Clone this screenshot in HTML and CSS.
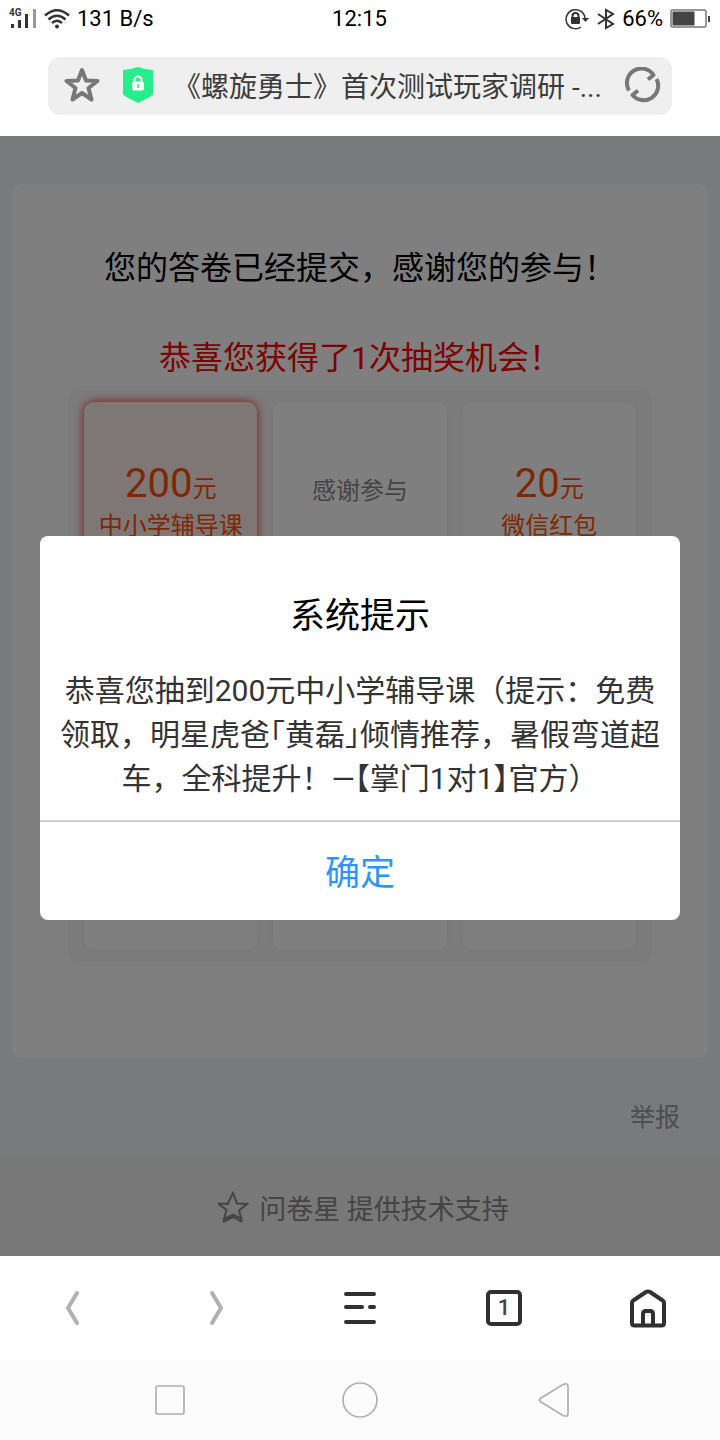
FILE: index.html
```html
<!DOCTYPE html>
<html lang="zh-CN">
<head>
    <meta charset="UTF-8">
    <meta name="viewport" content="width=device-width, initial-scale=1.0">
    <title>《螺旋勇士》首次测试玩家调研</title>
    <link rel="stylesheet" href="styles.css">
</head>
<body>
    <header class="status-bar">
        <div class="status-left">
            <svg width="28" height="22" viewBox="0 0 28 22">
                <text class="signal-label" x="0" y="8">4G</text>
                <path d="M2 16h3v4H2zM9 12h3v8H9zM16 6h3v14h-3z" fill="#333"/>
                <path d="M24 1h3v19h-3z" fill="#999"/>
            </svg>
            <svg width="26" height="22" viewBox="0 0 26 22" fill="none" stroke="#333" stroke-width="2.600">
                <path d="M1 7.500Q13-3 25 7.500M4.500 11.500Q13 4 21.500 11.500M8 15Q13 10.500 18 15"/>
                <circle cx="13" cy="18.500" r="2" fill="#333" stroke="none"/>
            </svg>
            <span>131 B/s</span>
        </div>
        <time>12:15</time>
        <div class="status-right">
            <svg width="26" height="22" viewBox="0 0 26 22" fill="none" stroke="#333" stroke-width="1.500">
                <path d="M17 19A9.500 9.500 0 1 1 21 10"/>
                <path d="M18 10h7l-3.500 4z" fill="#333" stroke="none"/>
                <path d="M8.500 11V8a3 3 0 0 1 6 0v3" stroke-width="2"/>
                <rect x="7" y="9" width="9" height="7" rx="1" fill="#333" stroke="none"/>
            </svg>
            <svg width="18" height="22" viewBox="0 0 18 22" fill="none" stroke="#333" stroke-width="2">
                <path d="M1 6l15 10-7 4V2l7 4L1 16"/>
            </svg>
            <span>66%</span>
            <svg width="40" height="20" viewBox="0 0 40 20">
                <rect x="1" y="1" width="35" height="17" rx="1" fill="none" stroke="#333"/>
                <path d="M2.500 2.500h22v14h-22zM38 7h2v6h-2z" fill="#444"/>
            </svg>
        </div>
    </header>

    <div class="address-bar">
        <button class="icon-button" aria-label="收藏">
            <svg width="36" height="36" viewBox="0 0 36 36" fill="none" stroke="#777" stroke-width="4" stroke-linejoin="round">
                <path d="M18 3l4 10.500 11.500.500-9 7 3 11.500L18 26l-9.500 6.500 3-11.500-9-7L14 13.500z"/>
            </svg>
        </button>
        <svg class="shield" width="30" height="36" viewBox="0 0 30 36">
            <path d="M15 0Q22 2.500 30 3v24.500Q29 29 15 36 1 29 0 27.500V3Q8 2.500 15 0z" fill="#26ee8b"/>
            <path d="M11.500 15v-2a3.500 3.500 0 0 1 7 0v2" fill="none" stroke="#fff" stroke-width="2"/>
            <rect x="9" y="14.500" width="12" height="9" rx="2" fill="#fff"/>
            <path d="M14.200 17h1.600v4h-1.600z" fill="#26ee8b"/>
        </svg>
        <input class="address" type="text" value="《螺旋勇士》首次测试玩家调研 -..." aria-label="网页标题" readonly>
        <button class="icon-button" aria-label="刷新">
            <svg width="36" height="36" viewBox="0 0 36 36" fill="none" stroke="#777" stroke-width="4" stroke-linejoin="round">
                <path d="M4 23.500A14.500 14.500 0 0 1 28.500 8L23 12.500M31.500 12A14.500 14.500 0 0 1 7.500 28l5.500-4.500"/>
            </svg>
        </button>
    </div>

    <main class="page">
        <section class="card">
            <h1 class="message">您的答卷已经提交，感谢您的参与！</h1>
            <p class="message chance">恭喜您获得了1次抽奖机会！</p>
            <div class="lottery">
                <div class="tile prize active">
                    <p class="amount">200<small>元</small></p>
                    <p>中小学辅导课</p>
                </div>
                <div class="tile">感谢参与</div>
                <div class="tile prize">
                    <p class="amount">20<small>元</small></p>
                    <p>微信红包</p>
                </div>
                <div class="tile"></div>
                <div class="tile"></div>
                <div class="tile"></div>
                <div class="tile"></div>
                <div class="tile"></div>
                <div class="tile"></div>
            </div>
        </section>
        <div class="report"><a href="#">举报</a></div>
        <footer class="support">
            <svg width="32" height="32" viewBox="0 0 32 32" fill="none" stroke="#888" stroke-width="2">
                <path d="M11 12l5-10 4 10.500 10 .500-8 6.500 3 10.500M1 12.500l8.500 6.500L7 28l9-4.500 8 4M1 12.500l11 .500M6 31l10-5 9 5"/>
            </svg>
            <a href="#">问卷星 提供技术支持</a>
        </footer>

        <div class="overlay">
            <div class="dialog" role="dialog" aria-labelledby="dialog-title">
                <h2 class="dialog-title" id="dialog-title">系统提示</h2>
                <p class="dialog-text">
                    恭喜您抽到200元中小学辅导课（提示：免费<br>
                    领取，明星虎爸<span class="half">「</span>黄磊<span class="half">」</span>倾情推荐，暑假弯道超<br>
                    车，全科提升！—<span class="half">【</span>掌门1对1<span class="half">】</span>官方）
                </p>
                <button class="confirm">确定</button>
            </div>
        </div>
    </main>

    <nav class="toolbar">
        <button class="icon-button" aria-label="后退">
            <svg width="40" height="40" viewBox="0 0 40 40" fill="none" stroke="#b0b0b0" stroke-width="4" stroke-linecap="round" stroke-linejoin="round">
                <path d="M25 5l-9 15 9 15"/>
            </svg>
        </button>
        <button class="icon-button" aria-label="前进">
            <svg width="40" height="40" viewBox="0 0 40 40" fill="none" stroke="#b0b0b0" stroke-width="4" stroke-linecap="round" stroke-linejoin="round">
                <path d="M16 5l9 15-9 15"/>
            </svg>
        </button>
        <button class="icon-button" aria-label="菜单">
            <svg width="40" height="40" viewBox="0 0 40 40" fill="none" stroke="#303030" stroke-width="4" stroke-linecap="round">
                <path d="M6 6h28M6 19h16M30 19h4M6 34h28"/>
            </svg>
        </button>
        <button class="icon-button" aria-label="标签页"><span class="tab-count">1</span></button>
        <button class="icon-button" aria-label="主页">
            <svg width="40" height="40" viewBox="0 0 40 40" fill="none" stroke="#303030" stroke-width="4" stroke-linejoin="round">
                <path d="M4 15q0-2 2-3L18 4q2-1.200 4 0l12 8q2 1 2 3v20q0 2.500-2.500 2.500h-27Q4 37.500 4 35z"/>
                <path d="M15 37V26q0-3 3-3h4q3 0 3 3v11"/>
            </svg>
        </button>
    </nav>

    <nav class="system-nav">
        <button class="icon-button" aria-label="最近任务">
            <svg width="40" height="40" viewBox="0 0 40 40" fill="none" stroke="#b0b0b0" stroke-width="1.700">
                <rect x="6" y="6" width="28" height="28" rx="2"/>
            </svg>
        </button>
        <button class="icon-button" aria-label="主屏幕">
            <svg width="40" height="40" viewBox="0 0 40 40" fill="none" stroke="#b0b0b0" stroke-width="1.700">
                <circle cx="20" cy="20" r="17"/>
            </svg>
        </button>
        <button class="icon-button" aria-label="返回">
            <svg width="40" height="40" viewBox="0 0 40 40" fill="none" stroke="#b0b0b0" stroke-width="1.700">
                <path d="M11 18L33 4.500q5-2 5 2v27q0 4-5 2L11 22q-3-2 0-4z"/>
            </svg>
        </button>
    </nav>
</body>
</html>
```
FILE: styles.css
```css
* {
    box-sizing: border-box;
}
body {
    margin: 0;
    min-height: 100vh;
    display: flex;
    flex-direction: column;
    background: #fff;
    color: #000;
    font-family: Roboto, "Noto Sans CJK SC", sans-serif;
    font-size: 24px;
}
h1, h2, p {
    margin: 0;
    font-weight: 400;
}
a {
    color: inherit;
    text-decoration: none;
}
svg {
    display: block;
    flex: none;
}
button, input {
    font-family: inherit;
    color: inherit;
    border: 0;
    padding: 0;
    background: none;
}
.icon-button {
    display: flex;
    align-items: center;
    justify-content: center;
    cursor: pointer;
}

/* phone status bar */
.status-bar {
    display: grid;
    grid-template-columns: 1fr auto 1fr;
    align-items: center;
    height: 37px;
    padding: 0 10px 0 9px;
    font-size: 22px;
}
.status-left, .status-right {
    display: flex;
    align-items: center;
    gap: 7px;
}
.status-right {
    justify-content: flex-end;
}
.signal-label {
    font-size: 10px;
    font-weight: 700;
    fill: #333;
}

.address-bar {
    display: flex;
    align-items: center;
    height: 58px;
    margin: 20px 48px 21px;
    padding: 0 11px 2px 16px;
    border-radius: 12px;
    background: #efefef;
}
.shield {
    margin: 0 20px 0 23px;
}
.address {
    flex: 1;
    min-width: 0;
    height: 56px;
    color: #3c3c3c;
    font-size: 28px;
    text-overflow: ellipsis;
}

/* survey result page */
.page {
    position: relative;
    flex: 1;
    display: flex;
    flex-direction: column;
    padding-top: 48px;
    background: #f3f5fb;
}
.card {
    margin: 0 12px;
    padding: 61px 56px 92px;
    border-radius: 10px;
    background: #fff;
    text-align: center;
}
.message {
    font-size: 32px;
    line-height: 46px;
    white-space: nowrap;
}
.chance {
    margin: 44px 0 5px;
    color: #f00;
}
.lottery {
    display: grid;
    grid-template-columns: repeat(3, 1fr);
    grid-auto-rows: 172px;
    gap: 16px;
    padding: 16px;
    border-radius: 16px;
    background: #f6f6f6;
}
.tile {
    display: flex;
    flex-direction: column;
    align-items: center;
    justify-content: center;
    padding-top: 6px;
    border-radius: 10px;
    background: #fff;
    box-shadow: 0 0 4px #eee;
    color: #888;
    line-height: 36px;
    white-space: nowrap;
}
.prize {
    padding-top: 32px;
    color: #ff5000;
}
.active {
    background: #ffecec;
    box-shadow: 0 0 10px #f22;
}
.amount {
    font-size: 40px;
    line-height: 38px;
}
.amount small {
    font-size: 24px;
}
.report {
    height: 98px;
    padding: 42px 40px 0;
    color: #999;
    font-size: 25px;
    line-height: 36px;
    text-align: right;
}
.support {
    flex: 1;
    display: flex;
    align-items: center;
    justify-content: center;
    gap: 10px;
    min-height: 100px;
    padding: 2px 0 0 6px;
    background: #f0f0f0;
    color: #888;
    font-size: 27px;
}

/* system prompt */
.overlay {
    position: absolute;
    inset: 0;
    padding: 400px 40px 0;
    background: rgba(0, 0, 0, 0.5);
}
.dialog {
    padding-top: 55px;
    border-radius: 8px;
    background: #fff;
    text-align: center;
}
.dialog-title {
    font-size: 35px;
    line-height: 52px;
}
.dialog-text {
    margin: 26px 0 19px;
    padding: 0 16px;
    color: #333;
    font-size: 30px;
    line-height: 44px;
}
.half {
    font-feature-settings: "halt";
}
.confirm {
    width: 100%;
    height: 100px;
    padding-bottom: 3px;
    border-top: 2px solid #d0d0d0;
    color: #3095f2;
    font-size: 35px;
    cursor: pointer;
}

.toolbar {
    display: grid;
    grid-template-columns: repeat(5, 1fr);
    height: 104px;
}
.tab-count {
    width: 36px;
    height: 36px;
    border: 4px solid #303030;
    border-radius: 5px;
    color: #444;
    font-size: 22px;
    font-weight: 500;
    line-height: 28px;
}
.system-nav {
    display: flex;
    justify-content: space-between;
    height: 80px;
    padding: 0 150px;
    background: #fbfbfb;
}
```
